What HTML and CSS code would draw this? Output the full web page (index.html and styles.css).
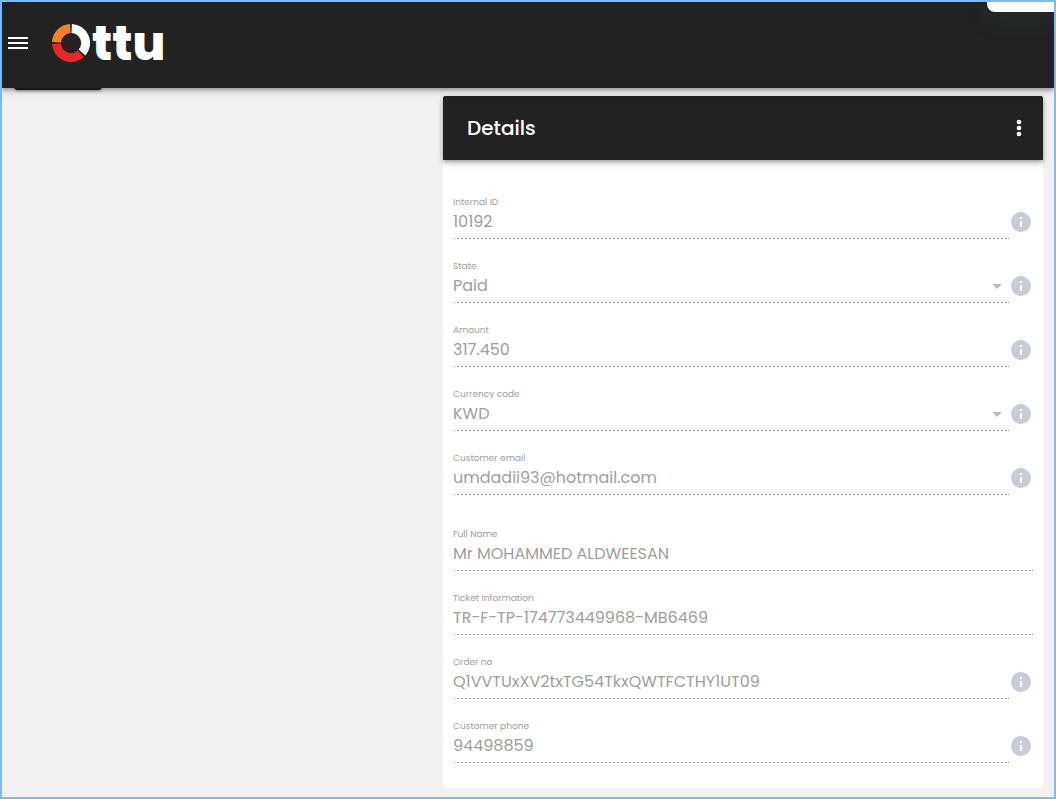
FILE: index.html
```html
<!DOCTYPE html>
<html lang="en">
<head>
    <meta charset="UTF-8">
    <meta name="viewport" content="width=device-width, initial-scale=1.0">
    <title>Ottu</title>
    <link rel="stylesheet" href="styles.css">
</head>
<body>
    <svg class="sprite" aria-hidden="true">
        <symbol id="info" viewBox="0 0 24 24">
            <path d="M13 9h-2V7h2m0 10h-2v-6h2m-1-9A10 10 0 0 0 2 12a10 10 0 0 0 10 10 10 10 0 0 0 10-10A10 10 0 0 0 12 2z"/>
        </symbol>
        <symbol id="arrow" viewBox="0 0 24 24">
            <path d="M7 9l5 5 5-5z"/>
        </symbol>
    </svg>

    <header class="toolbar">
        <button class="icon-btn" type="button" aria-label="Menu">
            <svg width="24" height="24" viewBox="0 0 24 24"><path d="M2 6h20v2H2zm0 5h20v2H2zm0 5h20v2H2z"/></svg>
        </button>
        <a class="logo" href="#" aria-label="Ottu">
            <svg width="38" height="38" viewBox="0 0 38 38" fill="none" stroke-width="9">
                <path stroke="#f5821f" d="M4.5 18.3A14.5 14.5 0 0 1 18.3 4.5"/>
                <path stroke="#fff" d="M19.7 4.5A14.5 14.5 0 0 1 30 28.5"/>
                <path stroke="#ee2427" d="M4.5 19.7A14.5 14.5 0 0 0 28.8 29.7"/>
            </svg>
            <span class="logo-text">ttu</span>
        </a>
        <div class="notice"></div>
    </header>

    <main class="content">
        <div class="side">
            <button class="side-btn" type="button" aria-label="Back"></button>
        </div>
        <section class="card">
            <div class="card-header">
                <h1>Details</h1>
                <button class="icon-btn" type="button" aria-label="More">
                    <svg width="24" height="24" viewBox="0 0 24 24"><circle cx="12" cy="6" r="2.3"/><circle cx="12" cy="12" r="2.3"/><circle cx="12" cy="18" r="2.3"/></svg>
                </button>
            </div>
            <form class="card-body">
                <div class="group">
                    <div class="field">
                        <div class="control">
                            <label for="internal-id">Internal ID</label>
                            <input id="internal-id" type="text" value="10192" disabled>
                        </div>
                        <svg class="info"><use href="#info"/></svg>
                    </div>
                    <div class="field">
                        <div class="control">
                            <label for="state">State</label>
                            <div class="select">
                                <select id="state" disabled><option>Paid</option></select>
                                <svg class="arrow"><use href="#arrow"/></svg>
                            </div>
                        </div>
                        <svg class="info"><use href="#info"/></svg>
                    </div>
                    <div class="field">
                        <div class="control">
                            <label for="amount">Amount</label>
                            <input id="amount" type="text" value="317.450" disabled>
                        </div>
                        <svg class="info"><use href="#info"/></svg>
                    </div>
                    <div class="field">
                        <div class="control">
                            <label for="currency">Currency code</label>
                            <div class="select">
                                <select id="currency" disabled><option>KWD</option></select>
                                <svg class="arrow"><use href="#arrow"/></svg>
                            </div>
                        </div>
                        <svg class="info"><use href="#info"/></svg>
                    </div>
                    <div class="field">
                        <div class="control">
                            <label for="email">Customer email</label>
                            <input id="email" type="email" value="umdadii93@hotmail.com" disabled>
                        </div>
                        <svg class="info"><use href="#info"/></svg>
                    </div>
                </div>
                <div class="group">
                    <div class="field">
                        <div class="control">
                            <label for="full-name">Full Name</label>
                            <input id="full-name" type="text" value="Mr MOHAMMED ALDWEESAN" disabled>
                        </div>
                    </div>
                    <div class="field">
                        <div class="control">
                            <label for="ticket">Ticket Information</label>
                            <input id="ticket" type="text" value="TR-F-TP-174773449968-MB6469" disabled>
                        </div>
                    </div>
                    <div class="field">
                        <div class="control">
                            <label for="order-no">Order no</label>
                            <input id="order-no" type="text" value="Q1VVTUxXV2txTG54TkxQWTFCTHY1UT09" disabled>
                        </div>
                        <svg class="info"><use href="#info"/></svg>
                    </div>
                    <div class="field">
                        <div class="control">
                            <label for="phone">Customer phone</label>
                            <input id="phone" type="tel" value="94498859" disabled>
                        </div>
                        <svg class="info"><use href="#info"/></svg>
                    </div>
                </div>
            </form>
        </section>
    </main>
</body>
</html>
```

FILE: styles.css
```css
* {
    box-sizing: border-box;
}
body {
    margin: 0;
    min-height: 100vh;
    border: 2px solid #7ab8ff;
    background-color: #f2f2f2;
    font-family: Poppins, Inter, sans-serif;
}
.sprite {
    display: none;
}
.toolbar {
    position: relative;
    z-index: 2;
    display: flex;
    align-items: center;
    gap: 22px;
    height: 86px;
    padding: 0 4px 4px;
    background-color: #222;
    box-shadow: 0 2px 4px rgba(0, 0, 0, 0.3), 0 4px 8px rgba(0, 0, 0, 0.12);
}
.icon-btn {
    display: flex;
    padding: 0;
    border: none;
    background: none;
    fill: #fff;
    cursor: pointer;
}
.logo {
    display: flex;
    align-items: center;
    gap: 2px;
    color: #fff;
    text-decoration: none;
}
.logo-text {
    padding-top: 2px;
    font-size: 48px;
    font-weight: 800;
    line-height: 38px;
}
/* snackbar sliding in from the top */
.notice {
    position: absolute;
    top: 0;
    right: 0;
    width: 67px;
    height: 10px;
    border-bottom-left-radius: 8px;
    background-color: #fff;
    box-shadow: 0 4px 24px rgba(80, 110, 100, 0.3);
    clip-path: inset(0 0 -40px -40px);
}
.content {
    display: grid;
    grid-template-columns: minmax(0, 1fr) minmax(0, 600px);
    padding: 8px 11px 9px 12px;
}
.side-btn {
    display: block;
    width: 88px;
    height: 36px;
    margin-top: -42px;
    border: none;
    border-radius: 4px;
    background-color: #222;
    box-shadow: 0 1px 3px rgba(0, 0, 0, 0.4);
}
.card {
    border-radius: 4px;
    background-color: #fff;
}
.card-header {
    display: flex;
    align-items: center;
    justify-content: space-between;
    height: 64px;
    padding: 0 12px 0 24px;
    border-radius: 2px 2px 0 0;
    background-color: #222;
    box-shadow: 0 2px 4px rgba(0, 0, 0, 0.3), 0 4px 8px rgba(0, 0, 0, 0.12);
}
.card-header h1 {
    margin: 0;
    color: #fff;
    font-size: 20px;
    font-weight: 500;
}
.card-body {
    display: flex;
    flex-direction: column;
    gap: 12px;
    padding: 15px 10px 25px;
}
.field {
    display: flex;
    align-items: flex-end;
    height: 64px;
}
.control {
    flex: 1;
    min-width: 0;
    border-bottom: 1px solid #999;
    border-image: repeating-linear-gradient(90deg, #999 0 2px, transparent 2px 4px) 1 repeat;
}
label {
    display: block;
    color: #9e9e9e;
    font-size: 9px;
    line-height: 10px;
}
input, select {
    display: block;
    width: 100%;
    height: 31px;
    padding: 0 0 2px;
    border: none;
    background: none;
    color: #9e9e9e;
    font-family: inherit;
    font-size: 16px;
    opacity: 1;
}
select {
    appearance: none;
}
.select {
    display: flex;
    align-items: center;
}
.arrow {
    flex: none;
    width: 24px;
    height: 24px;
    fill: #bdbdbd;
}
.info {
    flex: none;
    width: 24px;
    height: 24px;
    margin-bottom: 5px;
    fill: #c8ccda;
}
```
